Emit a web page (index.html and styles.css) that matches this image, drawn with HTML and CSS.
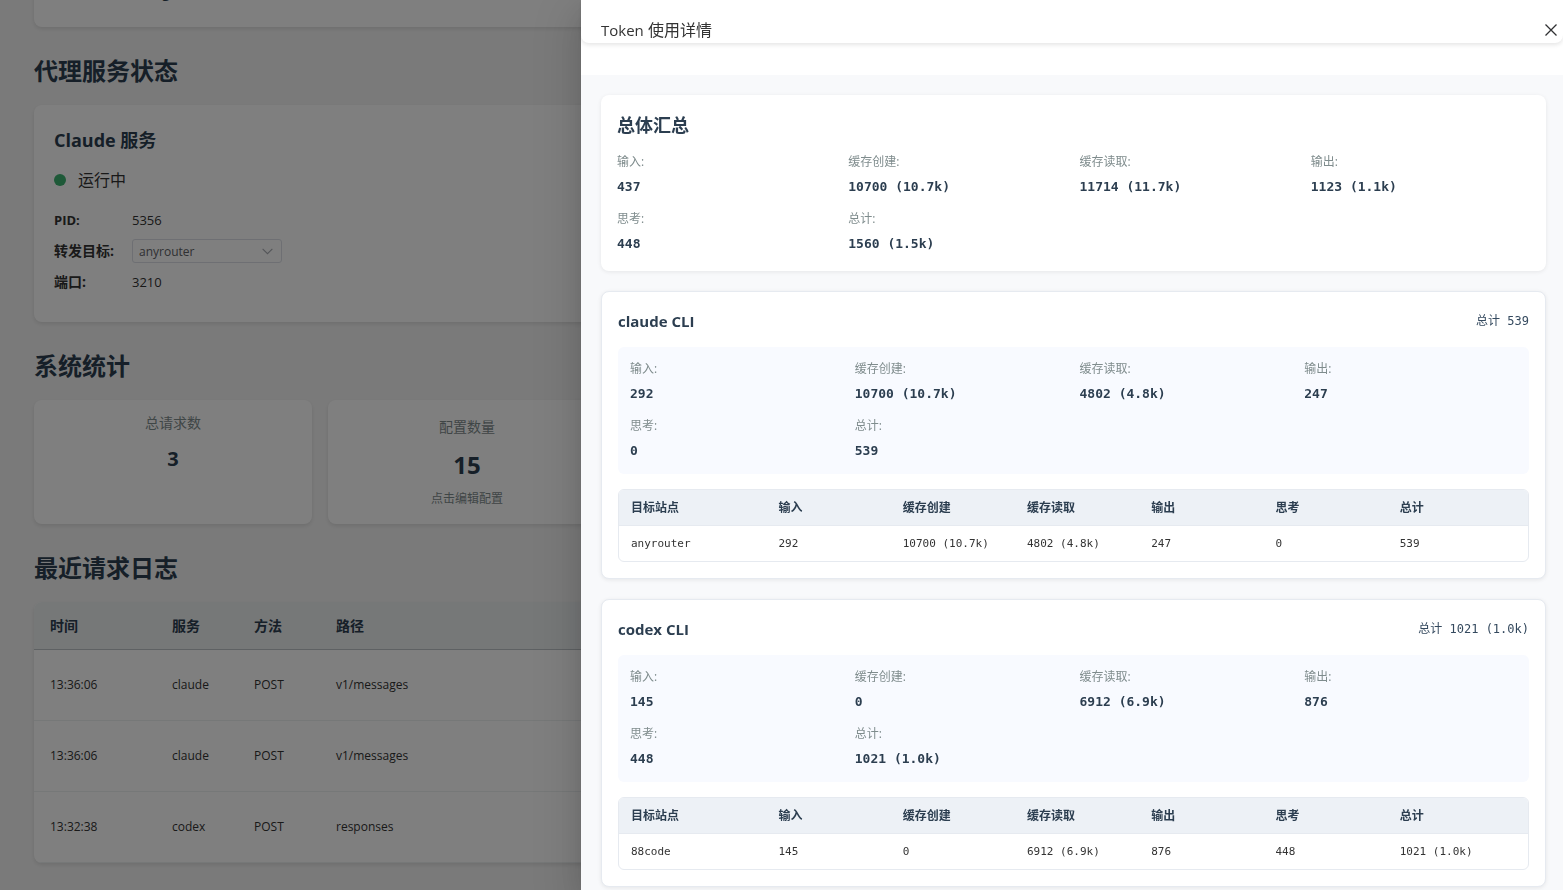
FILE: index.html
```html
<!DOCTYPE html>
<html lang="zh-CN">
<head>
<meta charset="utf-8">
<title>Token 使用详情</title>
<link rel="stylesheet" href="styles.css">
</head>
<body>
<main class="page">
  <div class="card top-card">g</div>

  <h2 class="section-title">代理服务状态</h2>
  <section class="card service">
    <h3 class="service-name">Claude 服务</h3>
    <p class="status"><span class="status-dot"></span>运行中</p>
    <div class="info-row"><span class="info-label latin">PID:</span><span class="latin">5356</span></div>
    <div class="info-row">
      <label class="info-label" for="target">转发目标:</label>
      <span class="select-wrap">
        <select id="target" class="select"><option>anyrouter</option></select>
        <svg class="chevron" viewBox="0 0 12 12"><path d="M1.5 3.5 6 8l4.500-4.500" fill="none" stroke="currentColor"/></svg>
      </span>
    </div>
    <div class="info-row"><span class="info-label">端口:</span><span class="latin">3210</span></div>
  </section>

  <h2 class="section-title">系统统计</h2>
  <section class="stats">
    <div class="card stat">
      <span class="stat-label">总请求数</span>
      <strong class="stat-value">3</strong>
    </div>
    <div class="card stat stat-large">
      <span class="stat-label">配置数量</span>
      <strong class="stat-value">15</strong>
      <span class="stat-note">点击编辑配置</span>
    </div>
    <div class="card stat"></div>
    <div class="card stat"></div>
    <div class="card stat"></div>
  </section>

  <h2 class="section-title">最近请求日志</h2>
  <table class="card log">
    <colgroup><col class="col-time"><col class="col-short"><col class="col-short"><col></colgroup>
    <thead><tr><th>时间</th><th>服务</th><th>方法</th><th>路径</th></tr></thead>
    <tbody>
      <tr><td>13:36:06</td><td>claude</td><td>POST</td><td>v1/messages</td></tr>
      <tr><td>13:36:06</td><td>claude</td><td>POST</td><td>v1/messages</td></tr>
      <tr><td>13:32:38</td><td>codex</td><td>POST</td><td>responses</td></tr>
    </tbody>
  </table>
</main>

<div class="overlay">
  <aside class="drawer" role="dialog" aria-labelledby="drawer-title">
    <header class="drawer-header">
      <span id="drawer-title"><span class="title-latin">Token</span> 使用详情</span>
      <button class="close" type="button" aria-label="关闭">
        <svg viewBox="0 0 14 14"><path d="M1.500 1.500l11 11M12.500 1.500l-11 11" fill="none" stroke="currentColor" stroke-width="1.300"/></svg>
      </button>
    </header>
    <div class="drawer-body">
      <section class="panel">
        <h3 class="panel-title">总体汇总</h3>
        <dl class="metrics">
          <div><dt>输入:</dt><dd>437</dd></div>
          <div><dt>缓存创建:</dt><dd>10700 (10.7k)</dd></div>
          <div><dt>缓存读取:</dt><dd>11714 (11.7k)</dd></div>
          <div><dt>输出:</dt><dd>1123 (1.1k)</dd></div>
          <div><dt>思考:</dt><dd>448</dd></div>
          <div><dt>总计:</dt><dd>1560 (1.5k)</dd></div>
        </dl>
      </section>

      <section class="panel cli">
        <header class="cli-header"><h4>claude CLI</h4><span class="cli-total">总计 539</span></header>
        <dl class="metrics metrics-box">
          <div><dt>输入:</dt><dd>292</dd></div>
          <div><dt>缓存创建:</dt><dd>10700 (10.7k)</dd></div>
          <div><dt>缓存读取:</dt><dd>4802 (4.8k)</dd></div>
          <div><dt>输出:</dt><dd>247</dd></div>
          <div><dt>思考:</dt><dd>0</dd></div>
          <div><dt>总计:</dt><dd>539</dd></div>
        </dl>
        <table class="sites">
          <thead><tr><th>目标站点</th><th>输入</th><th>缓存创建</th><th>缓存读取</th><th>输出</th><th>思考</th><th>总计</th></tr></thead>
          <tbody><tr><td>anyrouter</td><td>292</td><td>10700 (10.7k)</td><td>4802 (4.8k)</td><td>247</td><td>0</td><td>539</td></tr></tbody>
        </table>
      </section>

      <section class="panel cli">
        <header class="cli-header"><h4>codex CLI</h4><span class="cli-total">总计 1021 (1.0k)</span></header>
        <dl class="metrics metrics-box">
          <div><dt>输入:</dt><dd>145</dd></div>
          <div><dt>缓存创建:</dt><dd>0</dd></div>
          <div><dt>缓存读取:</dt><dd>6912 (6.9k)</dd></div>
          <div><dt>输出:</dt><dd>876</dd></div>
          <div><dt>思考:</dt><dd>448</dd></div>
          <div><dt>总计:</dt><dd>1021 (1.0k)</dd></div>
        </dl>
        <table class="sites">
          <thead><tr><th>目标站点</th><th>输入</th><th>缓存创建</th><th>缓存读取</th><th>输出</th><th>思考</th><th>总计</th></tr></thead>
          <tbody><tr><td>88code</td><td>145</td><td>0</td><td>6912 (6.9k)</td><td>876</td><td>448</td><td>1021 (1.0k)</td></tr></tbody>
        </table>
      </section>
    </div>
  </aside>
</div>
</body>
</html>
```
FILE: styles.css
```css
* { box-sizing: border-box; }
body {
  margin: 0;
  height: 100vh;
  overflow: hidden;
  background: #f5f5f5;
  color: #333;
  font-family: "Open Sans", "Noto Sans CJK SC", sans-serif;
  font-size: 14px;
  line-height: 22px;
}
h2, h3, h4, p, dl, dd { margin: 0; }

/* Dashboard */
.page { padding: 0 34px; }
.card {
  background: #fff;
  border-radius: 8px;
  box-shadow: 0 2px 4px rgba(0, 0, 0, 0.1);
}
.top-card { margin-top: -18px; padding: 0 128px 23px; font-weight: 600; color: #2c3e50; }
.section-title {
  margin: 25px 0 15px;
  font-size: 24px;
  line-height: 38px;
  font-weight: 700;
  color: #2c3e50;
}
.service { padding: 20px 20px 24px; }
.service-name { font-size: 18px; line-height: 30px; color: #2c3e50; }
.status {
  display: flex;
  align-items: center;
  gap: 12px;
  margin: 12px 0;
  font-size: 16px;
  line-height: 26px;
}
.status-dot { width: 12px; height: 12px; border-radius: 50%; background: #3cb371; }
.info-row { display: flex; align-items: center; height: 30px; margin-bottom: 1px; }
.info-label { width: 78px; font-weight: 700; }
.latin { font-size: 13px; }
.select-wrap { position: relative; display: flex; width: 150px; }
.select {
  appearance: none;
  width: 100%;
  height: 24px;
  padding: 0 6px;
  border: 1px solid #dcdfe6;
  border-radius: 3px;
  background: #fff;
  color: #606266;
  font: 12px "Open Sans", sans-serif;
}
.chevron { position: absolute; right: 8px; top: 6px; width: 13px; height: 13px; color: #a8abb2; }

.stats { display: grid; grid-template-columns: repeat(5, 278px); gap: 16px; }
.stat {
  display: flex;
  flex-direction: column;
  align-items: center;
  gap: 9px;
  padding: 12px;
}
.stat-large { padding: 16px 16px 18px; gap: 9px; }
.stat-label { color: #7f8c8d; }
.stat-value { font-size: 20px; line-height: 32px; color: #2c3e50; }
.stat-large .stat-value { font-size: 24px; line-height: 36px; }
.stat-note { font-size: 12px; line-height: 14px; color: #7f8c8d; }

.log { width: 100%; table-layout: fixed; border-spacing: 0; overflow: hidden; }
.col-time { width: 122px; }
.col-short { width: 82px; }
.log th, .log td { padding: 0 16px; text-align: left; }
.log th { height: 48px; background: #ecf0f1; border-bottom: 1px solid #bdc3c7; color: #2c3e50; }
.log td { height: 71px; border-bottom: 1px solid #ecf0f1; font-size: 12px; }

/* Drawer */
.overlay {
  position: fixed;
  inset: 0;
  display: flex;
  justify-content: flex-end;
  background: rgba(0, 0, 0, 0.5);
}
.drawer {
  display: flex;
  flex-direction: column;
  width: 982px;
  max-width: 100%;
  background: #fff;
  box-shadow: 0 16px 48px 16px rgba(0, 0, 0, 0.08), 0 12px 32px rgba(0, 0, 0, 0.12), 0 8px 16px -8px rgba(0, 0, 0, 0.16);
}
.drawer-header {
  display: flex;
  align-items: center;
  justify-content: space-between;
  margin-bottom: 32px;
  padding: 20px 5px 3px 20px;
  border-radius: 0 0 8px 8px;
  box-shadow: 0 2px 4px rgba(0, 0, 0, 0.1);
  color: #333;
  font-size: 16px;
  line-height: 20px;
}
.title-latin { font-size: 15px; }
.close { display: flex; padding: 0; border: 0; background: none; color: #303133; }
.close svg { width: 14px; height: 14px; }
.drawer-body {
  flex: 1;
  display: flex;
  flex-direction: column;
  gap: 20px;
  padding: 20px 17px 20px 20px;
  overflow: hidden;
  background: #f8f9fb;
}
.panel {
  flex: none;
  padding: 16px;
  border-radius: 8px;
  background: #fff;
  box-shadow: 0 1px 4px rgba(0, 0, 0, 0.08);
}
.panel-title { margin-bottom: 12px; font-size: 18px; line-height: 29px; color: #2c3e50; }
.metrics { display: grid; grid-template-columns: repeat(4, 1fr); gap: 11px 12px; }
.metrics dt { font-size: 12px; line-height: 19px; color: #7f8c8d; }
.metrics dd {
  margin-top: 4px;
  color: #2c3e50;
  font: 600 13px/23px "DejaVu Sans Mono", monospace;
}
.cli { border: 1px solid #e6eaf0; }
.cli-header { display: flex; align-items: center; justify-content: space-between; height: 26px; }
.cli-header h4 { font-size: 15px; color: #2c3e50; }
.cli-total { color: #34495e; font: 12px/26px "DejaVu Sans Mono", "Noto Sans CJK SC", monospace; }
.metrics-box { margin: 13px 0 15px; padding: 12px; border-radius: 6px; background: #f8faff; }

.sites {
  display: block;
  border: 1px solid #e6eaf0;
  border-radius: 6px;
  overflow: hidden;
  font-size: 12px;
}
.sites thead, .sites tbody { display: block; }
.sites tr {
  display: grid;
  grid-template-columns: 1.2fr repeat(6, 1fr);
  gap: 8px;
  padding: 0 12px;
  line-height: 35px;
}
.sites th, .sites td { padding: 0; text-align: left; }
.sites thead { background: #edf1f6; border-bottom: 1px solid #e6eaf0; color: #2c3e50; }
.sites td { font-family: "DejaVu Sans Mono", monospace; font-size: 11px; }
```
